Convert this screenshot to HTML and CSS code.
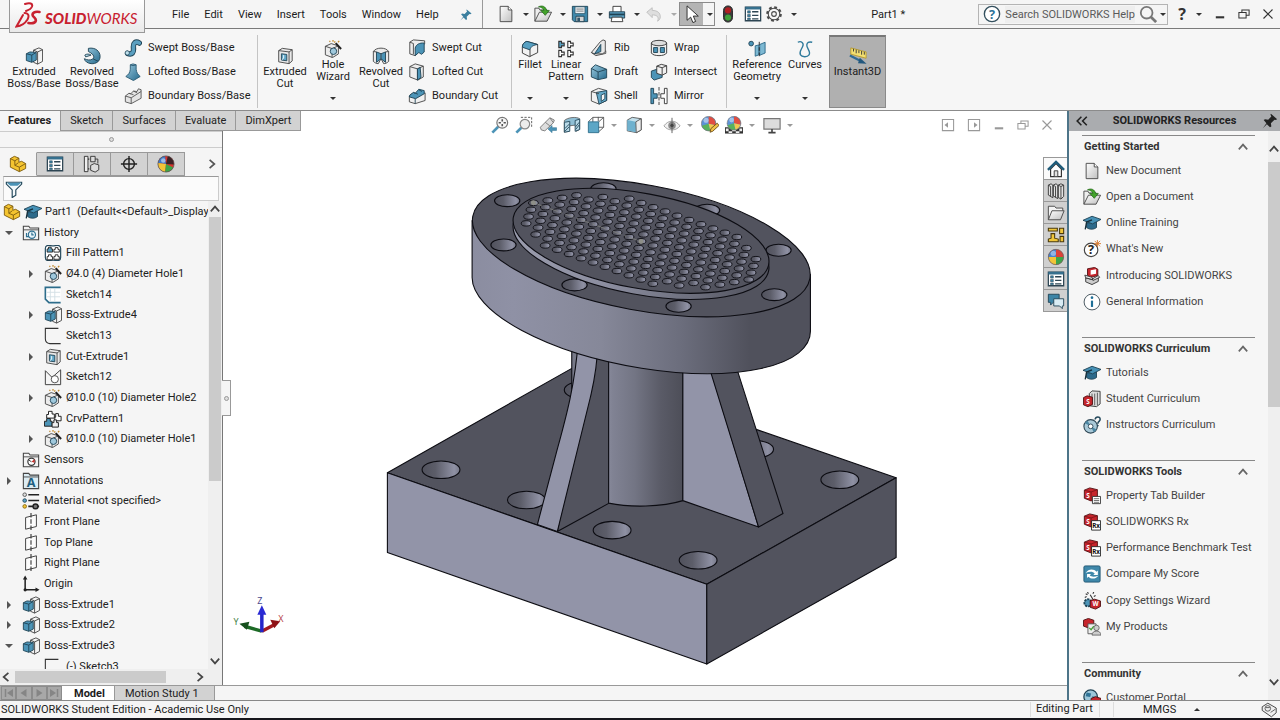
FILE: index.html
```html
<!DOCTYPE html>
<html lang="en">
<head>
<meta charset="utf-8">
<title>SOLIDWORKS - Part1</title>
<link rel="stylesheet" href="styles.css">
</head>
<body>
<svg class="defs" aria-hidden="true">
  <defs>
    <linearGradient id="g-blue" x1="0" y1="0" x2="1" y2="1"><stop offset="0" stop-color="#9ccbe0"/><stop offset="1" stop-color="#24698c"/></linearGradient>
    <linearGradient id="g-gray" x1="0" y1="0" x2="1" y2="1"><stop offset="0" stop-color="#ffffff"/><stop offset="1" stop-color="#bfbfbf"/></linearGradient>
  </defs>
  <symbol id="i-new" viewBox="0 0 20 20"><path d="M3.500 1.500h9l4 4v13h-13z" fill="url(#g-gray)" stroke="#444"/><path d="M12.500 1.500v4h4" fill="#fff" stroke="#444"/></symbol>
  <symbol id="i-open" viewBox="0 0 20 20"><path d="M1 18V3.500h4.500l1 2h8v3" fill="#eee" stroke="#444"/><path d="M1 18l5-10h13.500l-5 10z" fill="url(#g-gray)" stroke="#444"/><path d="M5 2c4-2 8-.5 9 4h3l-4.500 5.500L7.500 6H11c-.5-2-2.500-3.500-6-4z" fill="#43a32b" stroke="#1f6414" stroke-width=".8"/></symbol>
  <symbol id="i-save" viewBox="0 0 20 20"><path d="M1.500 1.500h17v17h-15l-2-2z" fill="#3f88aa" stroke="#1f4355"/><path d="M4.500 2h11v7.500h-11z" fill="#e9f0f4" stroke="#1f4355" stroke-width=".7"/><path d="M6 4.500h8M6 6.800h8" stroke="#777"/><path d="M5.500 12.500h9v6h-9z" fill="#d5d5d5" stroke="#1f4355"/><path d="M7 14h3v4H7z" fill="#31566a"/></symbol>
  <symbol id="i-print" viewBox="0 0 20 20"><path d="M5.500 8V1.500h9V8" fill="#fff" stroke="#333"/><path d="M1.500 7.500h17v7h-17z" fill="#5aa0c2" stroke="#233f4f"/><path d="M4.500 13.500h11l1 5h-13z" fill="#fff" stroke="#333"/><path d="M1.500 10.500h17" stroke="#1f4355" stroke-width="2"/></symbol>
  <symbol id="i-undo" viewBox="0 0 20 20"><path d="M2 8l6-5v3c6 0 9 3 9 7 0 2-1 4-3 5 2-5-1-7-6-7v3z" fill="#dedede" stroke="#bdbdbd"/></symbol>
  <symbol id="i-cursor" viewBox="0 0 20 20"><path d="M4.500 1v16l4-3.500 2.500 6 3-1.200-2.500-6H17z" fill="#fff" stroke="#222"/></symbol>
  <symbol id="i-traffic" viewBox="0 0 20 20"><rect x="5" y="1" width="10" height="18" rx="5" fill="#3a3a3a" stroke="#222"/><circle cx="10" cy="6" r="3.400" fill="#b01f22"/><circle cx="10" cy="14" r="3.400" fill="#3fa23a"/></symbol>
  <symbol id="i-list" viewBox="0 0 20 20"><path d="M1.500 2.500h17v15h-17z" fill="#fff" stroke="#2d4553" stroke-width="1.400"/><path d="M1.500 3.500h17" stroke="#356f8d" stroke-width="3"/><path d="M4 6.500h3v2.500H4zM4 10.500h3v2.500H4zM4 14.500h3v2H4z" fill="#3c84a6" stroke="#2d4553" stroke-width=".6"/><path d="M9 7.500h7M9 11.500h7M9 15.500h7" stroke="#2d4553" stroke-width="1.400"/></symbol>
  <symbol id="i-gear" viewBox="0 0 20 20"><circle cx="10" cy="10" r="7.400" fill="none" stroke="#4b4b4b" stroke-width="2.600" stroke-dasharray="3.100 2.712"/><circle cx="10" cy="10" r="6.400" fill="#f6f6f6" stroke="#4b4b4b" stroke-width="1.200"/><circle cx="10" cy="10" r="2.600" fill="none" stroke="#4b4b4b" stroke-width="1.200"/></symbol>
  <symbol id="i-pin" viewBox="0 0 20 20"><path d="M11 2l7 6-2 1-1-.5-4 4 .5 3.500-1.500 1-3.500-3.500L2 18l4-5.500L3 9l1.500-1 3.500.5 3.500-3.500L10.500 3z" fill="currentColor"/></symbol>
  <symbol id="i-extrude" viewBox="0 0 20 20"><path d="M9.500 3.500l6-2.500 4 2v13l-5.500 3-4.500-2z" fill="#f3f3f3" stroke="#444"/><path d="M14 5.500v13.500M14 5.500l5.500-2.500M14 5.500L9.500 3.500" fill="none" stroke="#444"/><path d="M1.500 7.500l4-2 7 .5v8.500l-5 2.500-6-2z" fill="#4c94b7" stroke="#1f4355"/><path d="M1.500 7.500l6 1.500v8M7.500 9l5-3" fill="none" stroke="#1f4355"/></symbol>
  <symbol id="i-revolve" viewBox="0 0 20 20"><path d="M6 1.500C14 0 19 5 19 10.500 19 16 14.500 19 9 18.500c-4-.5-7-2.500-7.500-5.500 3 1.500 6.500 2 9 .5C13 12 13 8.500 6 5z" fill="url(#g-blue)" stroke="#1f4355"/><path d="M2 9c2-1.500 5-1.500 7 0l-6 2z" fill="#b8dcea" stroke="#1f4355"/><path d="M11 13l6 3" stroke="#1f4355"/></symbol>
  <symbol id="i-sweep" viewBox="0 0 20 20"><path d="M4 16c5 2 7-1 6.500-6C10 4 13 2 17 4.500" fill="none" stroke="#1f4355" stroke-width="6" stroke-linecap="round"/><path d="M4 16c5 2 7-1 6.500-6C10 4 13 2 17 4.500" fill="none" stroke="#5a9fc0" stroke-width="4" stroke-linecap="round"/><circle cx="3.600" cy="15.500" r="2.400" fill="#bfe0ec" stroke="#1f4355" stroke-width=".8"/></symbol>
  <symbol id="i-loft" viewBox="0 0 20 20"><path d="M7 2l3-1 3.500 1v5c.5 4 2 6 4.500 8l-7.500 4.500L2 15c3-2 4.500-4 5-8z" fill="url(#g-blue)" stroke="#2a5a73"/><path d="M7 2l3 1 3.500-1" fill="none" stroke="#2a5a73"/></symbol>
  <symbol id="i-boundary" viewBox="0 0 20 20"><path d="M1.500 10l4-3 2 .5 3-3 4 .5 1.500-3 3 1v9.500L8 18.500l-6.500-2z" fill="#e4e4e4" stroke="#555"/><path d="M1.500 10L8 12v6.500M8 12l11-7M5.500 7l5 1.500M10.500 4.500l4 2" fill="none" stroke="#555"/></symbol>
  <symbol id="i-cut" viewBox="0 0 20 20"><path d="M3 4l4-2.500 11 1.500v12.500L14.500 18.500 3 16.500z" fill="#e9e9e9" stroke="#444"/><path d="M3 4l11.500 1.500v13M14.500 5.500L18 3" fill="none" stroke="#444"/><path d="M6 7.500l6 .8v7l-6-.8z" fill="#62a8c8" stroke="#1f4355"/><path d="M8.500 9v3.500L6.500 14" fill="none" stroke="#fff"/></symbol>
  <symbol id="i-hole" viewBox="0 0 20 20"><path d="M1.500 7l6.500-3 8 2.500v9L9.500 19.500l-8-3z" fill="#ececec" stroke="#444"/><path d="M1.500 7l7.500 2.500v10M9 9.500l7-3" fill="none" stroke="#444"/><circle cx="10.500" cy="12.500" r="3.600" fill="#9fc8dc" stroke="#1f4355"/><path d="M19 10L13 3.500" stroke="#222" stroke-width="2.200"/><path d="M6 1l1 1M10 0v2M17 1l-1.500 1.500M12.500 1.500L11.500 3" stroke="#c08a2e" stroke-width="1.400"/></symbol>
  <symbol id="i-revcut" viewBox="0 0 20 20"><path d="M1.500 5c3-5 14-5 17 0v11c-2 2-4 2.500-5.500 2.500L10 13l-3 5.500c-2 0-4-1-5.500-2.500z" fill="#e9e9e9" stroke="#444"/><path d="M5 5.500l5 2 5-2v11.500l-5-4-5 4z" fill="#4c94b7" stroke="#1f4355"/><path d="M1.500 5L5 5.500M18.500 5l-3.500.5M10 7.500V13" stroke="#444"/></symbol>
  <symbol id="i-sweptcut" viewBox="0 0 20 20"><path d="M2 3.500L6 1l12.500 1v3L8 18.500l-6-2z" fill="#ededed" stroke="#444"/><path d="M8 18.500V10c1-4 5-6 10-5.500v10l-3 2.500-3-2z" fill="#4c94b7" stroke="#1f4355"/><path d="M2 3.500l4 1.500v12" fill="none" stroke="#444"/></symbol>
  <symbol id="i-loftcut" viewBox="0 0 20 20"><path d="M2 4l6-3 9 2.500v12L11 19l-9-3.500z" fill="#ededed" stroke="#444"/><path d="M2 4l8.500 2.500V19M10.500 6.500L17 3.500" fill="none" stroke="#444"/><path d="M10.500 6.500l3-1.500 1 11-4 3z" fill="#4c94b7" stroke="#1f4355"/></symbol>
  <symbol id="i-boundcut" viewBox="0 0 20 20"><path d="M1.500 10l3-2.500 7 2 7.500-3v8.500L8 18.500l-6.500-2z" fill="#f0f0f0" stroke="#444"/><path d="M2 9l4-3 2 1 4-4.500 6 1.500v3.500L8.500 13 1.500 11z" fill="#4c94b7" stroke="#1f4355"/><path d="M8 13v5.500M6 6l5 2M12 3l3.500 2" stroke="#1f4355"/></symbol>
  <symbol id="i-fillet" viewBox="0 0 20 20"><path d="M1.500 8c0-3.500 2-5.500 5-6.500l12 3.500v9L9.500 18.500l-8-4z" fill="#f2f2f2" stroke="#333"/><path d="M1.500 8c0-3.500 2-5.500 5-6.500l12 3.500c-4 .5-8 2-8.500 6z" fill="#57a0c2" stroke="#1f4355"/><path d="M10 11v7.500" stroke="#333"/></symbol>
  <symbol id="i-linpat" viewBox="0 0 20 20"><g fill="#fff" stroke="#333" stroke-width="1.200"><path d="M2 1.500h3v2h3v3H5v2H2z" fill="#57a0c2"/><path d="M12 1.500h3v2h3v3h-3v2h-3z"/><path d="M2 11.500h3v2h3v3H5v2H2z"/><path d="M12 11.500h3v2h3v3h-3v2h-3z"/></g></symbol>
  <symbol id="i-rib" viewBox="0 0 20 20"><path d="M11.500 3l3-2 2.500 1v12l-3 2.500H5L1.500 15z" fill="#e9e9e9" stroke="#444"/><path d="M12 6v8l-7 2.500z" fill="#4c94b7" stroke="#1f4355"/><path d="M1.500 15l5 3.500 11-2.500v-3" fill="none" stroke="#444"/></symbol>
  <symbol id="i-draft" viewBox="0 0 20 20"><path d="M1.500 6L6 2l12.500 5v9.500L9 18.500l-7.500-3z" fill="url(#g-blue)" stroke="#1f4355"/><path d="M1.500 6L9 10v8.500M9 10l9.500-3" fill="none" stroke="#1f4355"/></symbol>
  <symbol id="i-shell" viewBox="0 0 20 20"><path d="M1.500 5l8-3.500 9 2.500v11l-8.500 4-8.500-3.500z" fill="#f0f0f0" stroke="#444"/><path d="M7 6L18.500 4v11L10 19z" fill="#62a8c8" stroke="#1f4355"/><path d="M12.500 9l4-2v6l-4 3z" fill="#f4f4f4" stroke="#1f4355"/><path d="M1.500 5L10 7.500" stroke="#444"/></symbol>
  <symbol id="i-wrap" viewBox="0 0 20 20"><path d="M1.500 4.500v11c2 4 15 4 17 0v-11" fill="#f0f0f0" stroke="#333"/><ellipse cx="10" cy="4.500" rx="8.500" ry="3" fill="#ddd" stroke="#333"/><path d="M4 9.500h4.500V15H4zM11.500 9.500H16V15h-4.500z" fill="#4c94b7" stroke="#1f4355"/></symbol>
  <symbol id="i-intersect" viewBox="0 0 20 20"><path d="M1.500 9l6-2 6 2v7l-9 3-3-3z" fill="#4c94b7" stroke="#1f4355"/><path d="M7.500 3.500l5-2 6 1.500v8l-5 2.500-6-2z" fill="#f0f0f0" stroke="#333"/><path d="M7.500 3.500l6 1.800v8M13.500 5.300l5-2.300" fill="none" stroke="#333"/></symbol>
  <symbol id="i-mirror" viewBox="0 0 20 20"><path d="M1 1.500h3v6h4v5H4v6H1z" fill="#4c94b7" stroke="#1f4355"/><path d="M19 1.500h-3v6h-4v5h4v6h3z" fill="#fff" stroke="#333"/><path d="M10 0v20" stroke="#333" stroke-dasharray="4 1.500"/></symbol>
  <symbol id="i-refgeo" viewBox="0 0 20 20"><circle cx="3.500" cy="4" r="2.600" fill="#4c94b7" stroke="#1f4355"/><path d="M8 6.500l4-1v11l-4 1.500zM13 5l6-2.500v12L13 17z" fill="#7db9d3" stroke="#2a6787"/><path d="M12.500 2v17" stroke="#222" stroke-dasharray="4 2"/></symbol>
  <symbol id="i-curves" viewBox="0 0 20 20"><path d="M2 2.500c4-2 7 1 5.500 4.500C6 11 3 13 5 16.500c1.500 2.500 7.500 3 9.500 0C17 13 11.500 9 12 5.500c.3-2.500 2-4 6-3" fill="none" stroke="#2f7a9c" stroke-width="1.500"/></symbol>
  <symbol id="i-instant" viewBox="0 0 20 20"><path d="M2 1l17 4.500v7L2 8z" fill="#f3df72" stroke="#b79b2c"/><path d="M5 2v3M8 3v4M11 3.800v3M14 4.500v4M17 5.500v3" stroke="#333"/><path d="M1 9.500l12 6" stroke="#2f6a94" stroke-width="2.500"/><path d="M12 12l7.500 6.500-9.500-.5z" fill="#23587e"/></symbol>
  <symbol id="i-part" viewBox="0 0 20 20"><path d="M1.500 4l4.500-2.500 5 2V8l3-1 4.500 2.500v5.500l-7 3.500-10-5z" fill="#f4c430" stroke="#7a5a10"/><path d="M1.500 4l5 2.500v5l5 2v5M6.500 6.500l4.500-3M11.500 13.500l7-4M6.500 11.500l4-3" fill="none" stroke="#7a5a10"/></symbol>
  <symbol id="i-config" viewBox="0 0 20 20"><path d="M2.500 1.500v17M2.500 4.500H7M2.500 15.500H7" stroke="#333" fill="none" stroke-width="1.400"/><path d="M1.500 1.500h4v17h-4z" fill="#eee" stroke="#333"/><path d="M8.500 1.500h5v6h-5zM8.500 11.500l4-2 5 1.500v5.500l-4 2.500-5-2z" fill="#ddd" stroke="#333"/><path d="M13.500 4.500h3v5" fill="none" stroke="#333"/></symbol>
  <symbol id="i-target" viewBox="0 0 20 20"><circle cx="10" cy="10" r="6" fill="none" stroke="#222" stroke-width="1.600"/><path d="M10 1v18M1 10h18" stroke="#222" stroke-width="1.600"/></symbol>
  <symbol id="i-sphere" viewBox="0 0 20 20"><circle cx="10" cy="10" r="9" fill="#d9332e"/><path d="M10 10L1 9a9 9 0 0 1 8-8z" fill="#3d78c8"/><path d="M10 10L1 9a9 9 0 0 0 8 9.900z" fill="#f2c437"/><path d="M10 10l-1 8.900A9 9 0 0 0 18 14z" fill="#3fa447"/><path d="M10 10l2-8.800c4 1 7 4.800 6.800 9.300z" fill="#3c2226"/><circle cx="7" cy="6" r="2.500" fill="#fff" opacity=".5"/><circle cx="10" cy="10" r="9" fill="none" stroke="#555" stroke-width=".8"/></symbol>
  <symbol id="i-ball" viewBox="0 0 20 20"><circle cx="10" cy="10" r="8.500" fill="#dc4138"/><path d="M10 10L10 1.500A8.500 8.500 0 0 0 1.500 10z" fill="#4684cf"/><path d="M10 10H1.500A8.500 8.500 0 0 0 10 18.500z" fill="#f2c437"/><path d="M10 10v8.500A8.500 8.500 0 0 0 18.500 10z" fill="#3fa447"/><circle cx="7" cy="6" r="3" fill="#fff" opacity=".4"/><circle cx="10" cy="10" r="8.500" fill="none" stroke="#666" stroke-width=".8"/></symbol>
  <symbol id="i-hudball" viewBox="0 0 20 20"><circle cx="10" cy="10" r="8.500" fill="#5b92d6"/><path d="M10 10L10 1.500A8.500 8.500 0 0 1 18 12z" fill="#e04d42"/><path d="M10 10L2 12.500A8.500 8.500 0 0 0 12 18.300z" fill="#58b25c"/><path d="M10 10l8 2a8.500 8.500 0 0 1-6 6.300z" fill="#f0c94f"/><circle cx="7" cy="6" r="3" fill="#fff" opacity=".45"/><circle cx="10" cy="10" r="8.500" fill="none" stroke="#777" stroke-width=".8"/></symbol>
  <symbol id="i-funnel" viewBox="0 0 20 20"><path d="M1.500 2.500h17v2L12 11v6l-4 2.500V11L1.500 4.500z" fill="#f5fafc" stroke="#24495c" stroke-width="1.300"/><path d="M2 3h16l-4 3.500H6z" fill="#4c94b7"/></symbol>
  <symbol id="i-cap" viewBox="0 0 20 20"><path d="M4 10v5c3 2.500 8 2.500 11 0V9z" fill="#2c6a8b" stroke="#1f4355"/><path d="M0 7l10-4.500L20 6 10.500 11z" fill="#4590b5" stroke="#1f4355"/><path d="M10 6.500L4 9l-1.500 8" fill="none" stroke="#16303d" stroke-width="1.500"/></symbol>
  <symbol id="i-folder" viewBox="0 0 20 20"><path d="M1.500 17.500v-15h7l1.500 2h7.500v3" fill="#f4f4f4" stroke="#444"/><path d="M1.500 17.500l4-10h13.500l-4 10z" fill="url(#g-gray)" stroke="#444"/></symbol>
  <symbol id="i-history" viewBox="0 0 20 20"><path d="M1.500 17.500v-15h6l1.500 2h9.500v13z" fill="#f3f3f3" stroke="#444" stroke-width="1.200"/><path d="M1.500 6.500h17" stroke="#444"/><circle cx="11" cy="12" r="4" fill="#e9f4f9" stroke="#2f7192" stroke-width="1.300"/><path d="M11 9.500V12h2M5 10v4h3" fill="none" stroke="#2f7192" stroke-width="1.300"/></symbol>
  <symbol id="i-sensors" viewBox="0 0 20 20"><path d="M1.500 17.500v-15h6l1.500 2h9.500v13z" fill="#f3f3f3" stroke="#444" stroke-width="1.200"/><path d="M1.500 6.500h17" stroke="#444"/><circle cx="10.500" cy="12" r="4" fill="#fff" stroke="#333" stroke-width="1.300"/><path d="M10.500 12L14 9v4z" fill="#c9302c"/><path d="M10.500 12L7.500 10" stroke="#333"/></symbol>
  <symbol id="i-annot" viewBox="0 0 20 20"><path d="M1.500 18.500v-17h6l1.500 2h9.500v15z" fill="#dcecf3" stroke="#444" stroke-width="1.200"/><path d="M1.500 5.500h17" stroke="#444"/></symbol>
  <symbol id="i-material" viewBox="0 0 20 20"><path d="M7 3h12M7 9.500h12M7 16h12" stroke="#222" stroke-width="1.800"/><circle cx="3" cy="3" r="2" fill="#ddd" stroke="#555"/><circle cx="3" cy="9.500" r="2" fill="#5aa0c2" stroke="#24495c"/><circle cx="3" cy="16" r="2" fill="#f2c437" stroke="#8a6a10"/><circle cx="15" cy="16" r="2.700" fill="#777" stroke="#222" stroke-width="1.600"/></symbol>
  <symbol id="i-plane" viewBox="0 0 20 20"><path d="M4 5l12-3v13L4 18z" fill="#fcfcfc" stroke="#444" stroke-width="1.100"/><path d="M10 0v20" stroke="#333" stroke-width="1.200" stroke-dasharray="5 2"/></symbol>
  <symbol id="i-origin" viewBox="0 0 20 20"><path d="M3.500 3v13.500H17" fill="none" stroke="#222" stroke-width="1.700"/><path d="M1 5l2.500-4.500L6 5zM15 14l4.500 2.500L15 19z" fill="#222"/><circle cx="3.500" cy="16.500" r="1.800" fill="#222"/></symbol>
  <symbol id="i-fillpat" viewBox="0 0 20 20"><path d="M1.500 9V5c0-5 5-3 8.500-3s8.500-2 8.500 3v10c0 5-5 3-8.500 3s-8.500 2-8.500-3z" fill="#fff" stroke="#24495c" stroke-width="1.300"/><path d="M5 3.500h3v2h1.500V9h-6V5.500H5z" fill="#5aa0c2" stroke="#222"/><path d="M12.500 4h3v2H17v3h-6V6h1.500zM5 12h3v2h1.500v3.500h-6V14H5zM12.500 12h3v2H17v3h-6v-3h1.500z" fill="#fff" stroke="#222"/></symbol>
  <symbol id="i-sketchg" viewBox="0 0 20 20"><path d="M18.500 1.500h-17v13l4 4h13" fill="#fff" stroke="#2d6d8b" stroke-width="1.800"/><path d="M7 3v14M12 3v14M3 7h15M3 12h15" stroke="#d2dfe5"/></symbol>
  <symbol id="i-sketch" viewBox="0 0 20 20"><path d="M16 1.500H1.500V13c0 3 2 5 5 5.500h12" fill="none" stroke="#333" stroke-width="1.200"/></symbol>
  <symbol id="i-sketchc" viewBox="0 0 20 20"><path d="M1.500 3v15.500h17V2L9 10.500z" fill="none" stroke="#444" stroke-width="1.100"/><circle cx="12" cy="12.500" r="4" fill="#fff" stroke="#444"/></symbol>
  <symbol id="i-crvpat" viewBox="0 0 20 20"><g stroke="#222" stroke-width="1.100"><path d="M5 1.500h4v3h2.500V9H3V5h2z" fill="#fff"/><path d="M13 4h3v3h3v5h-7V8h1z" fill="#fff"/><path d="M3 9.500h4v3h2V18H.5v-5.500H3z" fill="#4c94b7"/><path d="M11 11h3v3h2v5H9v-5h2z" fill="#eee"/></g></symbol>
  <symbol id="i-home" viewBox="0 0 20 20"><path d="M4 10v8.500h12V10l-6-6z" fill="#fff" stroke="#333" stroke-width="1.300"/><path d="M1 11L10 2l9 9" fill="none" stroke="#1f5c7a" stroke-width="2.600"/><path d="M8 18v-6h4v6" fill="#e2e2e2" stroke="#333"/></symbol>
  <symbol id="i-books" viewBox="0 0 20 20"><path d="M1.500 3.500l3-1.500 2 1.500v14l-5-3zM7 3.500L10 2l2 1.500v15l-5-3zM12.500 3.500l3-1.500 3 1.500V16l-3 3-3-2z" fill="#e2e2e2" stroke="#333"/><path d="M1.500 3.500L4 5v11M7 3.500L9.500 5v12M12.500 3.500L15.500 5v13.500M15.500 5l3-1.500" fill="none" stroke="#333"/></symbol>
  <symbol id="i-palette" viewBox="0 0 20 20"><path d="M1.500 2.500h10v3h-10zM14 2.500h4.500v6H14zM1.500 17.500v-3l3-1V8.500h4v5l4 1v3zM14.500 11.500h4v6h-4z" fill="#f0c63b" stroke="#4a3a0c" stroke-width="1.200"/></symbol>
  <symbol id="i-forum" viewBox="0 0 20 20"><path d="M1.500 2.500h12v9H7l-3 3v-3H1.500z" fill="#3c84a6" stroke="#1f4355"/><path d="M7.500 7.500h11v8H17v3l-3-3H7.500z" fill="#d9ecf4" stroke="#1f4355"/></symbol>
  <symbol id="i-whats" viewBox="0 0 20 20"><circle cx="9" cy="11" r="7.500" fill="#fff" stroke="#444" stroke-width="1.300"/><path d="M16 0v8M12 4h8M13 1l6 6M19 1l-6 6" stroke="#d7782d"/></symbol>
  <symbol id="i-info" viewBox="0 0 20 20"><circle cx="10" cy="10" r="8.800" fill="#fff" stroke="#4c5a62" stroke-width="1.100"/><path d="M10 8.500v7" stroke="#1f6f97" stroke-width="2.400"/><circle cx="10" cy="5.200" r="1.500" fill="#1f6f97"/></symbol>
  <symbol id="i-intro" viewBox="0 0 20 20"><path d="M5 2l8-1.500 3.500 2v7l-8 2-3.500-2z" fill="#c6252c" stroke="#551012"/><path d="M8.500 3.500l6-1v5l-6 1z" fill="#fff"/><path d="M3 12l7 2 7-3v5l-7 3.500-7-3z" fill="#ccc" stroke="#333"/><path d="M2 9l8 2.500 1 2.500-8-2zM10 13.500l7-4 1.500 2-7.500 3.500z" fill="#eee" stroke="#333"/></symbol>
  <symbol id="i-cube" viewBox="0 0 20 20"><path d="M1.500 3.500l6-2.500 8.500 2v9L9 15.500l-7.500-3z" fill="#c6252c" stroke="#4e0e11"/><path d="M1.500 3.500L9 5.500v10M9 5.500l7-2.500" fill="none" stroke="#7e1418"/></symbol>
  <symbol id="i-tabb" viewBox="0 0 20 20"><use href="#i-cube"/><path d="M10.500 10.500h9v8h-9z" fill="#fff" stroke="#333"/><path d="M12 13h6M12 15h6M12 17h6" stroke="#666"/></symbol>
  <symbol id="i-rx" viewBox="0 0 20 20"><use href="#i-cube"/><path d="M9.500 8.500h10v10.500h-10z" fill="#fff" stroke="#222"/></symbol>
  <symbol id="i-student" viewBox="0 0 20 20"><path d="M7 4l3-3 9 .5v14l-4 3-8-1z" fill="#ddd" stroke="#333"/><path d="M10 4v13M13 4v13M16 3v14" stroke="#555"/><path d="M.5 8.500l4-2 6 1.500v8l-5 2.500-5-2z" fill="#c6252c" stroke="#4e0e11"/></symbol>
  <symbol id="i-disc" viewBox="0 0 20 20"><circle cx="8.500" cy="11.500" r="7.500" fill="#a9c9d8" stroke="#2d4553" stroke-width="1.200"/><path d="M8.500 11.500L2 8a7.500 7.500 0 0 1 3-3zM8.500 11.500l6.500 3.500a7.500 7.500 0 0 1-3 3z" fill="#4c87a3"/><circle cx="8.500" cy="11.500" r="2.600" fill="#fff" stroke="#2d4553"/><path d="M13.500 4c0-4 6-4 5.500 0 0 2-2.500 2-2.500 4.500M16.500 10v1.500" fill="none" stroke="#24495c" stroke-width="1.700"/></symbol>
  <symbol id="i-compare" viewBox="0 0 20 20"><rect x="1" y="1" width="18" height="18" rx="1.500" fill="#3f88aa" stroke="#1f5570"/><path d="M3 9c3-5 9-5 12-1.500l1.500-1.500v5h-5l1.500-1.500c-2-2.500-6-2.500-10-.5zM17 12c-3 4-8 4-11 1l-1.500 1.500V10h4.500l-1.500 1.500c2 2 5 2 9.500.5z" fill="#fff"/></symbol>
  <symbol id="i-copyset" viewBox="0 0 20 20"><circle cx="5.500" cy="12" r="4" fill="#4c94b7" stroke="#1f4355" stroke-width="2" stroke-dasharray="2.500 1"/><path d="M8 9.500l5-1.500 6.500 2v6l-5.500 3-6-2z" fill="#c6252c" stroke="#4e0e11"/><path d="M8 3l3 5M3 2l2 1M5 0l1 2M12 0l-1 2M14 4l-2 1M2 6l2-1" stroke="#333" stroke-width="1.200"/></symbol>
  <symbol id="i-myprod" viewBox="0 0 20 20"><path d="M.5 2.500L6 .5l6 2v6L6 11 .5 9z" fill="#c6252c" stroke="#4e0e11"/><path d="M5.500 6.500h9v11h-9z" fill="#eee" stroke="#555"/><path d="M7 11l2 2 3-4" fill="none" stroke="#45a035" stroke-width="1.400"/><circle cx="15" cy="11" r="3" fill="#ccc" stroke="#666"/><path d="M10 19c0-6 10-6 10 0z" fill="#ccc" stroke="#666"/></symbol>
  <symbol id="i-portal" viewBox="0 0 20 20"><circle cx="8.500" cy="8.500" r="7.500" fill="#9cc6d9" stroke="#1f4355" stroke-width="1.400"/><path d="M4 4l5 1-1 4-5-1zM10 8l4 1-2 4z" fill="#2f7396"/><path d="M9 10.500l5-2 6 2v6l-5 3-6-2z" fill="#c6252c" stroke="#4e0e11"/></symbol>
  <symbol id="i-zoomfit" viewBox="0 0 20 20"><path d="M8 12l-6.500 6.500" stroke="#4c94b7" stroke-width="3"/><circle cx="12.500" cy="7.500" r="6" fill="#f7f7f7" stroke="#777" stroke-width="1.300"/><path d="M12.500 3.500v2.500M12.500 9v2.500M8.500 7.500H11M14 7.500h2.500" stroke="#555" stroke-width="1.800"/></symbol>
  <symbol id="i-zoomarea" viewBox="0 0 20 20"><path d="M6.500 1.500h12v12" fill="none" stroke="#555" stroke-dasharray="2.500 1.500"/><path d="M7 13l-5.500 5.500" stroke="#4c94b7" stroke-width="3"/><circle cx="11" cy="9" r="5.300" fill="#ececec" stroke="#888" stroke-width="1.300"/></symbol>
  <symbol id="i-prev" viewBox="0 0 20 20"><path d="M1.500 12.500L12 2l5 2.500-1 3-9.500 9-4-1z" fill="#dedede" stroke="#777"/><path d="M7 7l5 4M12 2l4 5.500" stroke="#777"/><path d="M19.500 13h-5v-2.500L10 14.500l4.500 4V16h5z" fill="#4c94b7" stroke="#2f6f8f" stroke-width=".6"/></symbol>
  <symbol id="i-section" viewBox="0 0 20 20"><path d="M1.500 5c4-3.500 13-4.500 17-2v12l-4 2v-7l-8 1v6l-5 1z" fill="#8fbfd5" stroke="#666"/><path d="M1.500 7l6-1v11l-6 1zM13.500 5l5-1.500V15l-5 2z" fill="#b9dae8" stroke="#24495c"/><path d="M2 14l5-5M2 17l5-5M14 12l4-5M14 15l4-5" stroke="#24495c"/></symbol>
  <symbol id="i-orient" viewBox="0 0 20 20"><path d="M6.500 1.500h12v11h-12zM1.500 6.500l5-5M13 17.500l5.500-5M13 6.500l5.500-5M12.500 1v5" fill="#fff" stroke="#555"/><path d="M1.500 6.500H13v12H1.500z" fill="#5ca6c6" stroke="#2d6d8b"/></symbol>
  <symbol id="i-display" viewBox="0 0 20 20"><path d="M2.500 4.500L8 1.500l10 1.500v12.500l-5 3-10.500-2z" fill="#c3e0ec" stroke="#555"/><path d="M2.500 4.500L12 6.500V18l-9.500-2z" fill="#6fb1ce"/><path d="M12 6.500l6-3.500v12.500l-5.500 3z" fill="#ececec" stroke="#555"/></symbol>
  <symbol id="i-eye" viewBox="0 0 20 20"><path d="M1 11c5-7 13-7 18 0-5 6-13 6-18 0z" fill="#f2f2f2" stroke="#999"/><circle cx="10" cy="10.500" r="4.200" fill="#8a8a8a"/><circle cx="10" cy="10.500" r="1.800" fill="#333"/><path d="M10 2v17" stroke="#555"/></symbol>
  <symbol id="i-appear" viewBox="0 0 20 20"><use href="#i-hudball" x="-1" y="-1" width="19" height="19"/><path d="M10 18l1-4 7-6 2 2.500-7 6.500z" fill="#f0c14a" stroke="#6b4c17"/></symbol>
  <symbol id="i-scene" viewBox="0 0 20 20"><path d="M0 12.500h20v7H0z" fill="#333"/><path d="M1 14h3v3H1zM16 14h3v3h-3zM4 17h4v2H4zM12 17h4v2h-4zM8 15h4v2H8z" fill="#eee"/><use href="#i-hudball" x="1" y="-1" width="18" height="18"/></symbol>
  <symbol id="i-monitor" viewBox="0 0 20 20"><path d="M1 3h18v11.500H1z" fill="#dcdcdc" stroke="#777" stroke-width="1.300"/><path d="M10 14.500v4M6 18.500h8" stroke="#444" stroke-width="1.800"/></symbol>
  <symbol id="i-min" viewBox="0 0 20 20"><path d="M3 15.500h14" stroke="currentColor" stroke-width="3.500"/></symbol>
  <symbol id="i-restore" viewBox="0 0 20 20"><path d="M1.500 7.500h12v9h-12zM6.500 7V3.500h12v8.500H14" fill="none" stroke="currentColor" stroke-width="1.700"/></symbol>
  <symbol id="i-close" viewBox="0 0 20 20"><path d="M2.500 2.500l15 15M17.500 2.500l-15 15" stroke="currentColor" stroke-width="1.900"/></symbol>
  <symbol id="i-paneL" viewBox="0 0 20 20"><path d="M2 2h16v16H2z" fill="none" stroke="currentColor" stroke-width="1.500"/><path d="M10 6v8l-5-4z" fill="currentColor"/></symbol>
  <symbol id="i-paneR" viewBox="0 0 20 20"><path d="M2 2h16v16H2z" fill="none" stroke="currentColor" stroke-width="1.500"/><path d="M10 6v8l5-4z" fill="currentColor"/></symbol>
  <symbol id="i-search" viewBox="0 0 20 20"><circle cx="8.500" cy="8.500" r="6.500" fill="none" stroke="#777" stroke-width="2"/><path d="M13 13l6 6" stroke="#777" stroke-width="3"/></symbol>
  <symbol id="i-help" viewBox="0 0 20 20"><circle cx="10" cy="10" r="8.500" fill="#fff" stroke="#34505e" stroke-width="1.500"/></symbol>
  <symbol id="i-tag" viewBox="0 0 20 20"><path d="M1.500 6l7-4.500 10.500 6v6L13 18.500 1.500 10.500z" fill="#eee" stroke="#444" stroke-width="1.200"/><circle cx="8.500" cy="8" r="3.500" fill="none" stroke="#444"/><path d="M12 13l6-4M6 7h5" stroke="#444"/></symbol>
  <symbol id="i-up" viewBox="0 0 20 20"><path d="M3 14l7-8 7 8" fill="none" stroke="currentColor" stroke-width="2.800"/></symbol>
  <symbol id="i-down" viewBox="0 0 20 20"><path d="M3 6l7 8 7-8" fill="none" stroke="currentColor" stroke-width="2.800"/></symbol>
  <symbol id="i-left" viewBox="0 0 20 20"><path d="M14 3l-8 7 8 7" fill="none" stroke="currentColor" stroke-width="2.800"/></symbol>
  <symbol id="i-right" viewBox="0 0 20 20"><path d="M6 3l8 7-8 7" fill="none" stroke="currentColor" stroke-width="2.800"/></symbol>
  <symbol id="i-dleft" viewBox="0 0 20 20"><path d="M9 3l-7 7 7 7M18 3l-7 7 7 7" fill="none" stroke="currentColor" stroke-width="2.600"/></symbol>
  <symbol id="i-first" viewBox="0 0 12 12"><path d="M2.500 2v8" stroke="currentColor" stroke-width="1.500"/><path d="M10 2v8L4 6z" fill="currentColor"/></symbol>
  <symbol id="i-back" viewBox="0 0 12 12"><path d="M8.500 2v8l-6-4z" fill="currentColor"/></symbol>
  <symbol id="i-next" viewBox="0 0 12 12"><path d="M3.500 2v8l6-4z" fill="currentColor"/></symbol>
  <symbol id="i-last" viewBox="0 0 12 12"><path d="M9.500 2v8" stroke="currentColor" stroke-width="1.500"/><path d="M2 2v8l6-4z" fill="currentColor"/></symbol>
</svg>

<header class="titlebar">
  <div class="logo">
    <svg class="ds" viewBox="0 0 26 27" aria-hidden="true"><g fill="none" stroke="#c8202f" stroke-linecap="round"><path d="M10 2c5-1.500 8-.5 7 2.500-.8 2.200-3 3.500-6 4.500" stroke-width="2"/><path d="M9.500 11c4 0 5 3 3 6.500C10 21.500 6 24 1.500 24.500L8 13" stroke-width="2"/><path d="M24.500 10c-5-1-8 1.500-6.500 4 1.500 2.200 4 3 2.500 5.500-1 1.800-4 2-7 1.500" stroke-width="2.600"/></g></svg>
    <span class="wordmark"><b>SOLID</b><i>WORKS</i></span>
  </div>
  <nav class="menu" aria-label="Main menu">
    <button>File</button><button>Edit</button><button>View</button><button>Insert</button><button>Tools</button><button>Window</button><button>Help</button>
    <button class="pin" aria-label="Pin menu"><svg class="ic14"><use href="#i-pin"/></svg></button>
  </nav>
  <div class="quick" role="toolbar" aria-label="Quick access">
    <button class="drop" aria-label="New"><svg class="ic18"><use href="#i-new"/></svg><span class="caret"></span></button>
    <button class="drop" aria-label="Open"><svg class="ic18"><use href="#i-open"/></svg><span class="caret"></span></button>
    <button class="drop" aria-label="Save"><svg class="ic18"><use href="#i-save"/></svg><span class="caret"></span></button>
    <button class="drop" aria-label="Print"><svg class="ic18"><use href="#i-print"/></svg><span class="caret"></span></button>
    <button class="drop off" aria-label="Undo"><svg class="ic18"><use href="#i-undo"/></svg><span class="caret"></span></button>
    <button class="drop picked" aria-label="Select"><span class="well"><svg class="ic18"><use href="#i-cursor"/></svg></span><span class="caret"></span></button>
    <button class="solo" aria-label="Rebuild"><svg class="ic18"><use href="#i-traffic"/></svg></button>
    <button class="solo" aria-label="File properties"><svg class="ic18"><use href="#i-list"/></svg></button>
    <button class="drop" aria-label="Options"><svg class="ic18"><use href="#i-gear"/></svg><span class="caret"></span></button>
  </div>
  <div class="doc-title">Part1 *</div>
  <form class="search">
    <svg class="ic18" viewBox="0 0 20 20"><use href="#i-help"/><text x="10" y="15" class="glyph" fill="#2b7398">?</text></svg>
    <input type="text" aria-label="Search SOLIDWORKS Help" placeholder="Search SOLIDWORKS Help">
    <button type="button" aria-label="Search"><svg class="ic18"><use href="#i-search"/></svg><span class="caret"></span></button>
  </form>
  <div class="wincontrols">
    <button class="help" aria-label="Help"><b>?</b><span class="caret"></span></button>
    <button aria-label="Minimize"><svg class="ic12"><use href="#i-min"/></svg></button>
    <button aria-label="Restore"><svg class="ic12"><use href="#i-restore"/></svg></button>
    <button aria-label="Close"><svg class="ic12"><use href="#i-close"/></svg></button>
  </div>
</header>

<div class="ribbon" role="toolbar" aria-label="Features">
  <div class="group">
    <button class="big w58"><svg class="ic18"><use href="#i-extrude"/></svg><span>Extruded Boss/Base</span></button>
    <button class="big w58"><svg class="ic18"><use href="#i-revolve"/></svg><span>Revolved Boss/Base</span></button>
    <div class="stack s133">
      <button><svg class="ic18"><use href="#i-sweep"/></svg>Swept Boss/Base</button>
      <button><svg class="ic18"><use href="#i-loft"/></svg>Lofted Boss/Base</button>
      <button><svg class="ic18"><use href="#i-boundary"/></svg>Boundary Boss/Base</button>
    </div>
  </div>
  <div class="group">
    <button class="big w48"><svg class="ic18"><use href="#i-cut"/></svg><span>Extruded Cut</span></button>
    <button class="big w48 menu-btn"><svg class="ic18"><use href="#i-hole"/></svg><span>Hole Wizard</span><span class="caret"></span></button>
    <button class="big w48"><svg class="ic18"><use href="#i-revcut"/></svg><span>Revolved Cut</span></button>
    <div class="stack s103">
      <button><svg class="ic18"><use href="#i-sweptcut"/></svg>Swept Cut</button>
      <button><svg class="ic18"><use href="#i-loftcut"/></svg>Lofted Cut</button>
      <button><svg class="ic18"><use href="#i-boundcut"/></svg>Boundary Cut</button>
    </div>
  </div>
  <div class="group">
    <button class="big w30 menu-btn"><svg class="ic18"><use href="#i-fillet"/></svg><span>Fillet</span><span class="caret"></span></button>
    <button class="big w42 menu-btn"><svg class="ic18"><use href="#i-linpat"/></svg><span>Linear Pattern</span><span class="caret"></span></button>
    <div class="stack s60">
      <button><svg class="ic18"><use href="#i-rib"/></svg>Rib</button>
      <button><svg class="ic18"><use href="#i-draft"/></svg>Draft</button>
      <button><svg class="ic18"><use href="#i-shell"/></svg>Shell</button>
    </div>
    <div class="stack s76">
      <button><svg class="ic18"><use href="#i-wrap"/></svg>Wrap</button>
      <button><svg class="ic18"><use href="#i-intersect"/></svg>Intersect</button>
      <button><svg class="ic18"><use href="#i-mirror"/></svg>Mirror</button>
    </div>
  </div>
  <div class="group last">
    <button class="big w54 menu-btn"><svg class="ic18"><use href="#i-refgeo"/></svg><span>Reference Geometry</span><span class="caret"></span></button>
    <button class="big w42 menu-btn"><svg class="ic18"><use href="#i-curves"/></svg><span>Curves</span><span class="caret"></span></button>
  </div>
  <button class="big instant" aria-pressed="true"><svg class="ic18"><use href="#i-instant"/></svg><span>Instant3D</span></button>
</div>

<main class="workspace">
  <div class="document">
    <div class="docrow">
      <aside class="sidebar">
        <nav class="tabs" aria-label="CommandManager">
          <button class="on">Features</button><button>Sketch</button><button>Surfaces</button><button>Evaluate</button><button>DimXpert</button>
        </nav>
        <div class="splitter"><span class="knob"></span></div>
        <nav class="paneltabs" aria-label="Manager tabs">
          <button class="on" aria-label="FeatureManager"><svg class="ic18"><use href="#i-part"/></svg></button>
          <button aria-label="PropertyManager"><svg class="ic18"><use href="#i-list"/></svg></button>
          <button aria-label="ConfigurationManager"><svg class="ic18"><use href="#i-config"/></svg></button>
          <button aria-label="DimXpertManager"><svg class="ic18"><use href="#i-target"/></svg></button>
          <button aria-label="DisplayManager"><svg class="ic18"><use href="#i-sphere"/></svg></button>
          <button class="more" aria-label="More tabs"><svg class="ic12"><use href="#i-right"/></svg></button>
        </nav>
        <label class="filter"><svg class="ic18"><use href="#i-funnel"/></svg><input type="text" aria-label="Filter"></label>
        <div class="treewrap">
          <ul class="tree">
            <li class="root"><svg class="ic18"><use href="#i-part"/></svg><svg class="ic18"><use href="#i-cap"/></svg><span>Part1&nbsp; (Default&lt;&lt;Default&gt;_Display</span></li>
            <li><span class="tw open"></span><svg class="ic18"><use href="#i-history"/></svg><span>History</span></li>
            <li class="sub"><span class="tw"></span><svg class="ic18"><use href="#i-fillpat"/></svg><span>Fill Pattern1</span></li>
            <li class="sub"><span class="tw shut"></span><svg class="ic18"><use href="#i-hole"/></svg><span>Ø4.0 (4) Diameter Hole1</span></li>
            <li class="sub"><span class="tw"></span><svg class="ic18"><use href="#i-sketchg"/></svg><span>Sketch14</span></li>
            <li class="sub"><span class="tw shut"></span><svg class="ic18"><use href="#i-extrude"/></svg><span>Boss-Extrude4</span></li>
            <li class="sub"><span class="tw"></span><svg class="ic18"><use href="#i-sketch"/></svg><span>Sketch13</span></li>
            <li class="sub"><span class="tw shut"></span><svg class="ic18"><use href="#i-cut"/></svg><span>Cut-Extrude1</span></li>
            <li class="sub"><span class="tw"></span><svg class="ic18"><use href="#i-sketchc"/></svg><span>Sketch12</span></li>
            <li class="sub"><span class="tw shut"></span><svg class="ic18"><use href="#i-hole"/></svg><span>Ø10.0 (10) Diameter Hole2</span></li>
            <li class="sub"><span class="tw"></span><svg class="ic18"><use href="#i-crvpat"/></svg><span>CrvPattern1</span></li>
            <li class="sub"><span class="tw shut"></span><svg class="ic18"><use href="#i-hole"/></svg><span>Ø10.0 (10) Diameter Hole1</span></li>
            <li><span class="tw"></span><svg class="ic18"><use href="#i-sensors"/></svg><span>Sensors</span></li>
            <li><span class="tw shut"></span><svg class="ic18" viewBox="0 0 20 20"><use href="#i-annot"/><text x="10" y="17" class="glyph" fill="#1f5f80">A</text></svg><span>Annotations</span></li>
            <li><span class="tw"></span><svg class="ic18"><use href="#i-material"/></svg><span>Material &lt;not specified&gt;</span></li>
            <li><span class="tw"></span><svg class="ic18"><use href="#i-plane"/></svg><span>Front Plane</span></li>
            <li><span class="tw"></span><svg class="ic18"><use href="#i-plane"/></svg><span>Top Plane</span></li>
            <li><span class="tw"></span><svg class="ic18"><use href="#i-plane"/></svg><span>Right Plane</span></li>
            <li><span class="tw"></span><svg class="ic18"><use href="#i-origin"/></svg><span>Origin</span></li>
            <li><span class="tw shut"></span><svg class="ic18"><use href="#i-extrude"/></svg><span>Boss-Extrude1</span></li>
            <li><span class="tw shut"></span><svg class="ic18"><use href="#i-extrude"/></svg><span>Boss-Extrude2</span></li>
            <li><span class="tw open"></span><svg class="ic18"><use href="#i-extrude"/></svg><span>Boss-Extrude3</span></li>
            <li class="sub"><span class="tw"></span><svg class="ic18"><use href="#i-sketch"/></svg><span>(-) Sketch3</span></li>
          </ul>
          <div class="vbar"><svg class="ic12"><use href="#i-up"/></svg><span class="thumb"></span><svg class="ic12 end"><use href="#i-down"/></svg></div>
        </div>
        <div class="hbar"><svg class="ic12"><use href="#i-left"/></svg><span class="thumb"></span><svg class="ic12"><use href="#i-right"/></svg></div>
        <span class="handle"><span class="knob"></span></span>
      </aside>

      <section class="viewport" aria-label="Graphics area">
        <svg class="model" viewBox="223 110 844 576" preserveAspectRatio="xMidYMid meet">
          <defs>
            <linearGradient id="m-side" x1="472" x2="811" y1="0" y2="0" gradientUnits="userSpaceOnUse"><stop offset="0" stop-color="#8b8da0"/><stop offset=".12" stop-color="#8f91a5"/><stop offset=".38" stop-color="#868899"/><stop offset=".62" stop-color="#6b6d7c"/><stop offset=".82" stop-color="#50515c"/><stop offset="1" stop-color="#50515c"/></linearGradient>
            <linearGradient id="m-rim" x1="512" x2="770" y1="0" y2="0" gradientUnits="userSpaceOnUse"><stop offset="0" stop-color="#9a9cad"/><stop offset=".4" stop-color="#8b8d9f"/><stop offset=".75" stop-color="#6b6d7b"/><stop offset="1" stop-color="#50515c"/></linearGradient>
            <linearGradient id="m-col"><stop offset="0" stop-color="#868899"/><stop offset=".06" stop-color="#808293"/><stop offset=".35" stop-color="#737584"/><stop offset=".7" stop-color="#5a5b67"/><stop offset="1" stop-color="#4d4e58"/></linearGradient>
            <linearGradient id="m-hole"><stop offset="0" stop-color="#50515c"/><stop offset=".35" stop-color="#5c5d69"/><stop offset=".85" stop-color="#8f91a4"/><stop offset="1" stop-color="#777989"/></linearGradient>
          </defs>
          <g stroke="#0c0c12" stroke-width="1.100" stroke-linejoin="round">
            <path d="M386.500 473L572 368L758 430L897 478L707 585z" fill="#52535e"/>
            <path d="M386.500 473L707 585V665L386.500 553z" fill="#9294a8"/>
            <path d="M707 585L897 478V558L707 665z" fill="#52535e"/>
            <g fill="url(#m-hole)">
              <ellipse cx="440.300" cy="470" rx="19" ry="8.800"/><ellipse cx="526" cy="500.300" rx="19" ry="8.800"/><ellipse cx="612" cy="530.600" rx="19" ry="8.800"/><ellipse cx="698.300" cy="560.800" rx="19" ry="8.800"/><ellipse cx="840.500" cy="480" rx="19" ry="8.800"/><ellipse cx="755" cy="449.500" rx="19" ry="8.800"/><ellipse cx="583" cy="390" rx="19" ry="8.800"/>
            </g>
            <path d="M571.500 340H580V396H571.500z" fill="#777988" stroke="none"/>
            <path d="M571.500 340V392" fill="none"/>
            <path d="M597 340H609V503.500L557 532z" fill="#52535e"/>
            <path d="M578 340H598C597 370 593 385 590 398L557 532L537 525L556 453C565 420 575 385 578 340z" fill="#9294a8"/>
            <path d="M608.500 340H683V501C662 507.500 630 508 608.500 503.500z" fill="url(#m-col)"/>
            <path d="M683 340H702L759 527.500L683 501z" fill="#9294a8"/>
            <path d="M701 340H728L783.500 514L759 527.500z" fill="#52535e"/>
            <path d="M471.500 220V277A172 63 10.500 0 0 811 331V274z" fill="url(#m-side)"/>
            <ellipse cx="641.300" cy="247" rx="172" ry="63" transform="rotate(10.500 641.300 247)" fill="#52535e"/>
            <g fill="url(#m-hole)">
              <ellipse cx="506.700" cy="200" rx="12.700" ry="6"/><ellipse cx="603.300" cy="188" rx="12.700" ry="6"/><ellipse cx="707.300" cy="209.500" rx="12.700" ry="6"/><ellipse cx="779" cy="249.700" rx="12.700" ry="6"/><ellipse cx="774.700" cy="294.300" rx="12.700" ry="6"/><ellipse cx="678.700" cy="306" rx="12.700" ry="6"/><ellipse cx="574.300" cy="284.500" rx="12.700" ry="6"/><ellipse cx="503" cy="244.400" rx="12.700" ry="6"/>
            </g>
            <ellipse cx="641" cy="246.500" rx="130.300" ry="47.700" transform="rotate(10.500 641 246.500)" fill="url(#m-rim)"/>
            <ellipse cx="641" cy="240.300" rx="130.300" ry="47.700" transform="rotate(10.500 641 240.300)" fill="#52535e"/>
            <g id="perforation" stroke-width="0.900" fill="url(#m-hole)"></g>
          </g>
          <path d="M533 202L641 241" stroke="#8e8f88" stroke-dasharray="9 3 2 3" opacity=".6"/>
          <circle cx="533" cy="202" r="2.500" fill="#8e8f88"/><circle cx="641" cy="241" r="2.500" fill="#8e8f88"/>
          <g class="triad">
            <path d="M260.500 632L243 627" stroke="#1d6a26" stroke-width="3.500"/><path d="M238 624.500l10-2-2.500 8z" fill="#164f1d"/>
            <path d="M260.500 632L273 625.500" stroke="#a31b20" stroke-width="3.500"/><path d="M279 622l-10-1.500 4 8.500z" fill="#8e1216"/>
            <path d="M260.500 633V613" stroke="#2525c9" stroke-width="3.500"/><path d="M260.500 606l4.500 9.500h-9z" fill="#2a2ad4"/>
            <text x="256" y="605" fill="#4a4a8e">Z</text><text x="232" y="626" fill="#3f7f45">Y</text><text x="277" y="623" fill="#b8474b">X</text>
          </g>
        </svg>
        <div class="hud" role="toolbar" aria-label="View">
          <button aria-label="Zoom to fit"><svg class="ic18"><use href="#i-zoomfit"/></svg></button>
          <button aria-label="Zoom to area"><svg class="ic18"><use href="#i-zoomarea"/></svg></button>
          <button aria-label="Previous view"><svg class="ic18"><use href="#i-prev"/></svg></button>
          <button aria-label="Section view"><svg class="ic18"><use href="#i-section"/></svg></button>
          <button class="drop" aria-label="View orientation"><svg class="ic18"><use href="#i-orient"/></svg><span class="caret"></span></button>
          <button class="drop" aria-label="Display style"><svg class="ic18"><use href="#i-display"/></svg><span class="caret"></span></button>
          <button class="drop" aria-label="Hide or show items"><svg class="ic18"><use href="#i-eye"/></svg><span class="caret"></span></button>
          <button aria-label="Edit appearance"><svg class="ic18"><use href="#i-appear"/></svg></button>
          <button class="drop" aria-label="Apply scene"><svg class="ic18"><use href="#i-scene"/></svg><span class="caret"></span></button>
          <button class="drop" aria-label="View settings"><svg class="ic18"><use href="#i-monitor"/></svg><span class="caret"></span></button>
        </div>
        <div class="docctl">
          <button aria-label="Expand left"><svg class="ic14"><use href="#i-paneL"/></svg></button>
          <button aria-label="Expand right"><svg class="ic14"><use href="#i-paneR"/></svg></button>
          <button aria-label="Minimize document"><svg class="ic12"><use href="#i-min"/></svg></button>
          <button aria-label="Restore document"><svg class="ic12"><use href="#i-restore"/></svg></button>
          <button aria-label="Close document"><svg class="ic12"><use href="#i-close"/></svg></button>
        </div>
        <nav class="sidetabs" aria-label="Task pane tabs">
          <button class="on" aria-label="Resources"><svg class="ic18"><use href="#i-home"/></svg></button>
          <button aria-label="Design library"><svg class="ic18"><use href="#i-books"/></svg></button>
          <button aria-label="File explorer"><svg class="ic18"><use href="#i-folder"/></svg></button>
          <button aria-label="View palette"><svg class="ic18"><use href="#i-palette"/></svg></button>
          <button aria-label="Appearances"><svg class="ic18"><use href="#i-ball"/></svg></button>
          <button aria-label="Custom properties"><svg class="ic18"><use href="#i-list"/></svg></button>
          <button aria-label="Forum"><svg class="ic18"><use href="#i-forum"/></svg></button>
        </nav>
      </section>
    </div>
    <nav class="sheets" aria-label="Document tabs">
      <span class="nav4"><button aria-label="First"><svg class="ic12"><use href="#i-first"/></svg></button><button aria-label="Previous"><svg class="ic12"><use href="#i-back"/></svg></button><button aria-label="Next"><svg class="ic12"><use href="#i-next"/></svg></button><button aria-label="Last"><svg class="ic12"><use href="#i-last"/></svg></button></span>
      <button class="sheet on">Model</button><button class="sheet">Motion Study 1</button>
    </nav>
  </div>

  <aside class="taskpane">
    <header><button aria-label="Collapse"><svg class="ic12"><use href="#i-dleft"/></svg></button><h2>SOLIDWORKS Resources</h2><button aria-label="Pin"><svg class="ic18"><use href="#i-pin"/></svg></button></header>
    <div class="panebody">
      <div class="sections">
        <section><h3>Getting Started<svg class="ic12"><use href="#i-up"/></svg></h3>
          <ul>
            <li><a href="#"><svg class="ic18"><use href="#i-new"/></svg>New Document</a></li>
            <li><a href="#"><svg class="ic18"><use href="#i-open"/></svg>Open a Document</a></li>
            <li><a href="#"><svg class="ic18"><use href="#i-cap"/></svg>Online Training</a></li>
            <li><a href="#"><svg class="ic18" viewBox="0 0 20 20"><use href="#i-whats"/><text x="9" y="16" class="glyph" fill="#222">?</text></svg>What's New</a></li>
            <li><a href="#"><svg class="ic18"><use href="#i-intro"/></svg>Introducing SOLIDWORKS</a></li>
            <li><a href="#"><svg class="ic18"><use href="#i-info"/></svg>General Information</a></li>
          </ul></section>
        <section><h3>SOLIDWORKS Curriculum<svg class="ic12"><use href="#i-up"/></svg></h3>
          <ul>
            <li><a href="#"><svg class="ic18"><use href="#i-cap"/></svg>Tutorials</a></li>
            <li><a href="#"><svg class="ic18" viewBox="0 0 20 20"><use href="#i-student"/><text x="5.500" y="15.500" class="tiny" fill="#fff">S</text></svg>Student Curriculum</a></li>
            <li><a href="#"><svg class="ic18"><use href="#i-disc"/></svg>Instructors Curriculum</a></li>
          </ul></section>
        <section><h3>SOLIDWORKS Tools<svg class="ic12"><use href="#i-up"/></svg></h3>
          <ul>
            <li><a href="#"><svg class="ic18" viewBox="0 0 20 20"><use href="#i-tabb"/><text x="5.500" y="12" class="tiny" fill="#fff">S</text></svg>Property Tab Builder</a></li>
            <li><a href="#"><svg class="ic18" viewBox="0 0 20 20"><use href="#i-rx"/><text x="5.500" y="12" class="tiny" fill="#fff">S</text><text x="14.500" y="16.500" class="tiny" fill="#111">Rx</text></svg>SOLIDWORKS Rx</a></li>
            <li><a href="#"><svg class="ic18" viewBox="0 0 20 20"><use href="#i-rx"/><text x="5.500" y="12" class="tiny" fill="#fff">S</text><text x="14.500" y="16.500" class="tiny" fill="#111">Rx</text></svg>Performance Benchmark Test</a></li>
            <li><a href="#"><svg class="ic18"><use href="#i-compare"/></svg>Compare My Score</a></li>
            <li><a href="#"><svg class="ic18" viewBox="0 0 20 20"><use href="#i-copyset"/><text x="14" y="16" class="tiny" fill="#fff">W</text></svg>Copy Settings Wizard</a></li>
            <li><a href="#"><svg class="ic18"><use href="#i-myprod"/></svg>My Products</a></li>
          </ul></section>
        <section><h3>Community<svg class="ic12"><use href="#i-up"/></svg></h3>
          <ul><li><a href="#"><svg class="ic18"><use href="#i-portal"/></svg>Customer Portal</a></li></ul></section>
      </div>
      <div class="vbar wide"><svg class="ic12"><use href="#i-up"/></svg><span class="thumb"></span><svg class="ic12 end"><use href="#i-down"/></svg></div>
    </div>
  </aside>
</main>

<footer class="status">
  <span class="edition">SOLIDWORKS Student Edition - Academic Use Only</span>
  <span class="cell mode">Editing Part</span>
  <span class="cell gapcell"></span>
  <span class="cell units">MMGS <span class="caret upc"></span></span>
  <svg class="ic16"><use href="#i-tag"/></svg>
</footer>
<script src="model.js"></script>
</body>
</html>
```
FILE: styles.css
```css
* { box-sizing: border-box; }
html, body { height: 100%; margin: 0; }
body {
  display: flex; flex-direction: column; overflow: hidden;
  background: #f5f5f5; color: #1c1c1c;
  font: 11px/14px Roboto, "Noto Sans", sans-serif;
}
button { border: 0; padding: 0; background: none; color: inherit; font: inherit; }
input { border: 0; padding: 0; background: none; font: inherit; min-width: 0; outline: 0; }
ul { list-style: none; margin: 0; padding: 0; }
h2, h3 { margin: 0; font-size: inherit; }
a { color: inherit; text-decoration: none; }
svg { display: block; flex: none; }
.defs { position: absolute; width: 0; height: 0; }
.ic12 { width: 12px; height: 12px; }
.ic14 { width: 14px; height: 14px; }
.ic16 { width: 16px; height: 16px; }
.ic18 { width: 18px; height: 18px; }
.glyph { font: bold 14px "Noto Sans", sans-serif; text-anchor: middle; }
.tiny { font: bold 7px "Noto Sans", sans-serif; text-anchor: middle; }
.caret { flex: none; width: 0; height: 0; border: 3px solid transparent; border-top-color: #333; border-bottom: 0; }
.caret.upc { border: 3px solid transparent; border-bottom-color: #333; border-top: 0; }

/* title bar */
.titlebar { flex: none; display: flex; align-items: center; height: 29px; border-bottom: 1px solid #7a7a7a; }
.logo {
  align-self: flex-start; position: relative; z-index: 2; flex: none;
  display: flex; align-items: center; gap: 4px; width: 136px; height: 33px; margin-left: 9px; padding-left: 5px;
  border: 1px solid #999; border-top: 0; background: linear-gradient(#fff, #e9e9e9);
}
.ds { width: 26px; height: 27px; margin-bottom: 2px; }
.wordmark { padding-top: 4px; color: #c8202f; font: italic 15px/18px Lato, sans-serif; white-space: nowrap; }
.wordmark b { font-weight: 900; }
.wordmark i { font-weight: 400; }
.menu { display: flex; align-items: center; gap: 15px; width: 338px; height: 28px; padding: 2px 9px 0 27px; border-right: 1px solid #9a9a9a; }
.pin { margin-left: auto; color: #3b7f9f; }
.quick { display: flex; align-items: center; margin-left: 14px; }
.drop { display: flex; align-items: center; gap: 8px; width: 37px; }
.quick .off { width: 34px; }
.off .caret { border-top-color: #aaa; }
.drop.picked { gap: 4px; width: 36px; height: 24px; border: 1px solid #8b8b8b; }
.well { display: grid; place-items: center; width: 23px; height: 22px; background: #b4b4b4; }
.solo { width: 25px; display: grid; place-items: center; }
.doc-title { flex: 1; padding: 2px 4px 0 0; text-align: center; }
.search { display: flex; align-items: center; gap: 4px; flex: none; width: 190px; height: 21px; padding-left: 4px; border: 1px solid #b4b4b4; }
.search input { flex: 1; height: 17px; background: #eee; color: #555; }
.search input::placeholder { color: #5a5a5a; opacity: 1; }
.search button { display: flex; align-items: center; gap: 3px; width: 28px; }
.wincontrols { display: flex; align-items: center; gap: 12px; padding: 0 6px 0 10px; color: #333; }
.wincontrols .help { display: flex; align-items: center; gap: 10px; }
.help b { font: bold 16px/20px "Noto Sans", sans-serif; }

/* ribbon */
.ribbon { flex: none; display: flex; height: 82px; padding: 6px 0 2px 5px; border-bottom: 1px solid #8b8b8b; background: #f6f6f6; }
.group { display: flex; padding-right: 3px; margin-right: 3px; border-right: 1px solid #c4c4c4; }
.group.last { border: 0; padding: 0; }
.big { display: flex; flex-direction: column; align-items: center; padding-top: 12px; line-height: 12px; text-align: center; flex: none; gap: 1px; }
.big.menu-btn { padding-top: 5px; }
.big .caret { margin-top: auto; margin-bottom: 8px; }
.w30 { width: 30px; } .w42 { width: 42px; } .w48 { width: 48px; } .w54 { width: 54px; } .w58 { width: 58px; }
.stack { display: grid; grid-template-rows: repeat(3, 24px); padding: 1px 0 0 3px; }
.stack button { display: flex; align-items: center; gap: 6px; white-space: nowrap; }
.s60 { width: 60px; } .s76 { width: 76px; } .s103 { width: 103px; } .s133 { width: 133px; }
.big.instant { width: 57px; background: #b0b0b0; border: 1px solid #8a8a8a; border-top: 2px solid #777; padding-top: 10px; }

/* workspace */
.workspace { flex: 1; display: flex; min-height: 0; }
.document { flex: 1; display: flex; flex-direction: column; min-width: 0; }
.docrow { flex: 1; display: flex; min-height: 0; }
.sidebar { position: relative; z-index: 1; flex: none; display: flex; flex-direction: column; width: 223px; border-right: 1px solid #777; }
.tabs { flex: none; display: flex; width: max-content; height: 20px; background: #f5f5f5; }
.tabs button { padding: 0 9px; background: #d2d2d2; border: 1px solid #999; border-left: 0; border-top: 0; color: #222; }
.tabs .on { padding: 0 9px 0 8px; background: #f5f5f5; border-bottom: 0; font-weight: 700; }
.splitter { flex: none; height: 17px; display: grid; place-items: center; border: 1px solid #ccc; border-left: 0; border-right: 0; }
.knob { width: 5px; height: 5px; border: 1px solid #999; border-radius: 50%; background: #ddd; }
.paneltabs { flex: none; display: flex; height: 28px; margin-top: 4px; }
.paneltabs button { display: grid; place-items: center; width: 37px; height: 24px; background: #d2d2d2; border: 1px solid #999; border-left: 0; }
.paneltabs .on { background: none; border-color: transparent #999 transparent transparent; }
.paneltabs .more { width: auto; flex: 1; background: none; border: 0; padding-left: 16px; color: #555; }
.filter { flex: none; display: flex; height: 25px; margin: -4px 3px 0; padding: 3px 0 0 1px; border: 1px solid #ccc; border-top-color: #999; background: #fbfbfb; }
.filter input { flex: 1; }
.treewrap { flex: 1; display: flex; min-height: 0; overflow: hidden; }
.tree { flex: 1; min-width: 0; height: 0; color: #222; }
.tree li { display: flex; align-items: center; gap: 4px; height: 21px; padding-left: 4px; white-space: nowrap; }
.tree li:nth-child(3n) { height: 20px; }
.tree li > span:last-child { overflow: hidden; }
.tree .root { gap: 3px; padding-left: 3px; }
.tree .sub { padding-left: 26px; }
.tw { flex: none; width: 14px; height: 10px; display: grid; place-items: center start; }
.tw::before { content: ""; width: 0; height: 0; }
.tw.shut::before { margin-left: 3px; border: 4px solid transparent; border-left-color: #555; border-right: 0; }
.tw.open::before { margin-left: 1px; border: 4px solid transparent; border-top-color: #555; border-bottom: 0; }
.vbar { flex: none; display: flex; flex-direction: column; align-items: center; width: 14px; padding: 2px 0; background: #efefef; color: #444; }
.vbar .thumb { flex: 0 0 57%; width: 12px; margin-top: 2px; background: #cbcbcb; }
.vbar .end { margin-top: auto; }
.hbar { flex: none; display: flex; align-items: center; height: 16px; background: #efefef; color: #444; }
.hbar .thumb { width: 151px; height: 12px; margin: 0 28px 0 3px; background: #cbcbcb; }
.handle { position: absolute; top: 269px; right: -9px; width: 9px; height: 36px; display: grid; place-items: center; border: 1px solid #999; border-left: 0; background: #f5f5f5; }

.viewport { position: relative; flex: 1; min-width: 0; background: #fff; }
.model { width: 100%; height: 100%; }
.triad text { font: 9px "Noto Sans", sans-serif; }
.hud { position: absolute; top: 5px; left: 0; right: 5px; display: flex; justify-content: center; gap: 6px; }
.hud .drop { width: 32px; gap: 6px; }
.hud .caret { border-top-color: #999; }
.docctl { position: absolute; top: 7px; right: 14px; display: flex; align-items: center; gap: 12px; color: #999; }
.sidetabs { position: absolute; top: 46px; right: 0; width: 24px; border: 1px solid #999; border-right: 0; border-bottom: 0; }
.sidetabs button { display: grid; place-items: center; width: 100%; height: 22px; background: #d0d0d0; border-bottom: 1px solid #999; }
.sidetabs .on { background: #fafafa; }

.sheets { flex: none; display: flex; height: 15px; border-top: 1px solid #999; background: #f5f5f5; }
.nav4 { display: flex; width: 62px; padding-left: 1px; background: #a8a8a8; }
.nav4 button { flex: 1; display: grid; place-items: center; border: 1px solid #8c8c8c; color: #858585; }
.sheet { padding: 0 15px 0 10px; border-right: 1px solid #999; background: #d2d2d2; line-height: 13px; }
.sheet.on { padding: 0 9px 0 12px; background: #fff; font-weight: 700; }

/* task pane */
.taskpane { flex: none; display: flex; flex-direction: column; width: 213px; border-left: 2px solid #4d7488; background: #f6f6f6; }
.taskpane header { flex: none; display: flex; align-items: center; justify-content: space-between; height: 20px; padding: 0 1px 0 7px; background: #aaacaf; color: #222; }
.taskpane h2 { font-weight: 700; }
.panebody { flex: 1; display: flex; justify-content: space-between; min-height: 0; overflow: hidden; }
.sections { width: 173px; margin: 4px 0 0 13px; height: 0; color: #444; }
.sections section { border-top: 1px solid #888; margin-bottom: 22px; }
.sections h3 { display: flex; align-items: center; justify-content: space-between; height: 22px; padding: 0 6px 0 2px; color: #333; font-weight: 700; }
.sections h3 svg { color: #666; }
.sections a { display: flex; align-items: center; gap: 5px; height: 26px; padding-left: 1px; white-space: nowrap; }
.sections li:nth-child(5n) a { height: 27px; }
.vbar.wide { padding: 12px 0; width: 12px; }
.vbar.wide .thumb { flex-basis: 45%; margin-top: 7px; }

/* status bar */
.status { flex: none; display: flex; align-items: center; height: 20px; padding: 0 3px 0 1px; border-top: 1px solid #888; border-bottom: 2px solid #16161c; }
.edition { flex: 1; }
.cell { height: 15px; padding-left: 5px; border-left: 1px solid #ddd; }
.mode { width: 69px; }
.gapcell { width: 14px; }
.units { display: flex; align-items: center; gap: 18px; width: 148px; padding-left: 29px; }
```
FILE: model.js
```js
// Perforated plate: a staggered lattice of holes, one entry per row as [row, first, last].
const rows = [[0, -9, 9]];
[[1, -8, 9], [2, -7, 9], [3, -6, 9], [4, -4, 8], [5, -2, 7]].forEach(([j, a, b]) => {
  rows.push([j, a, b], [-j, -b, -a]);
});
const group = document.getElementById("perforation");
rows.forEach(([j, first, last]) => {
  for (let i = first; i <= last; i++) {
    const hole = document.createElementNS("http://www.w3.org/2000/svg", "ellipse");
    hole.setAttribute("cx", 641 + i * 12 + j * 2.43);
    hole.setAttribute("cy", 240.7 + i * 4.27 - j * 6.83);
    hole.setAttribute("rx", 4.9);
    hole.setAttribute("ry", 2.7);
    group.appendChild(hole);
  }
});
```
